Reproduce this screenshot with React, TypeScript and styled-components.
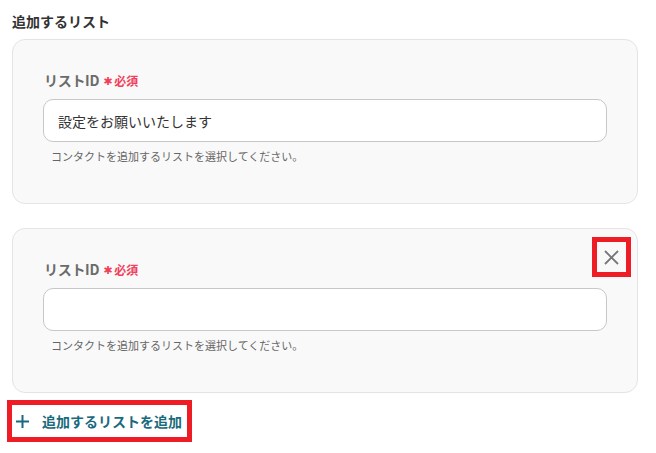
import React from "react";
import styled, { createGlobalStyle } from "styled-components";

const Global = createGlobalStyle`
  html, body { margin: 0; padding: 0; background: #fff; }
  body { font-family: "Noto Sans CJK JP", "Noto Sans", sans-serif; }
  * { box-sizing: border-box; }
`;

const Page = styled.div`
  padding: 12px 18px 0 12px;
  display: flex;
  flex-direction: column;
`;

const Title = styled.div`
  font-size: 14px;
  font-weight: 700;
  color: #333;
  line-height: 18px;
  margin-bottom: 9px;
`;

const Cards = styled.div`
  display: flex;
  flex-direction: column;
  gap: 24px;
`;

const Card = styled.div`
  position: relative;
  background: #f9f9f9;
  border: 1px solid #e4e4e4;
  border-radius: 13px;
  padding: 30px 30px 39px 30px;
  height: 165px;
`;

const Label = styled.div`
  display: flex;
  align-items: center;
  height: 20px;
  margin-bottom: 9px;
  padding-left: 1px;
`;

const LabelText = styled.span`
  font-size: 14px;
  font-weight: 700;
  color: #6b6b6b;
  letter-spacing: -0.3px;
`;

const Asterisk = styled.span`
  color: #f0405a;
  font-family: "DejaVu Sans", sans-serif;
  font-size: 11px;
  font-weight: 700;
  margin-left: 4px;
  line-height: 1;
  position: relative;
  top: 1px;
`;

const Required = styled.span`
  color: #f0405a;
  font-size: 12px;
  font-weight: 700;
  margin-left: 2px;
`;

const Input = styled.div`
  height: 43px;
  background: #fff;
  border: 1px solid #c8c8c8;
  border-radius: 10px;
  display: flex;
  align-items: center;
  padding-left: 14px;
  font-size: 14px;
  color: #333;
`;

const Help = styled.div`
  margin-top: 6px;
  padding-left: 8px;
  font-size: 11px;
  line-height: 16px;
  color: #666;
`;

const CloseButton = styled.button`
  position: absolute;
  top: 8px;
  right: 6px;
  width: 39px;
  height: 40px;
  border: 5px solid #ee1c25;
  background: transparent;
  padding: 0;
  display: flex;
  align-items: center;
  justify-content: center;
  cursor: pointer;
`;

const AddButton = styled.button`
  align-self: flex-start;
  margin-top: 7px;
  margin-left: -5px;
  height: 42px;
  border: 5px solid #ee1c25;
  background: #fff;
  padding: 0 5px 0 4px;
  display: flex;
  align-items: center;
  gap: 13px;
  font-family: "Noto Sans CJK JP", "Noto Sans", sans-serif;
  font-size: 14px;
  font-weight: 700;
  color: #1a6a7e;
  cursor: pointer;
`;

const Field: React.FC<{ value?: string }> = ({ value }) => (
  <>
    <Label>
      <LabelText>リストID</LabelText>
      <Asterisk>✱</Asterisk>
      <Required>必須</Required>
    </Label>
    <Input>{value}</Input>
    <Help>コンタクトを追加するリストを選択してください。</Help>
  </>
);

export default function App() {
  return (
    <>
      <Global />
      <Page>
        <Title>追加するリスト</Title>
        <Cards>
          <Card>
            <Field value="設定をお願いいたします" />
          </Card>
          <Card>
            <CloseButton aria-label="削除">
              <svg width="15" height="15" viewBox="0 0 15 15">
                <path d="M1 1L14 14M14 1L1 14" stroke="#777" strokeWidth="1.8" fill="none" />
              </svg>
            </CloseButton>
            <Field />
          </Card>
        </Cards>
        <AddButton>
          <svg width="13" height="13" viewBox="0 0 13 13">
            <path d="M6.5 0V13M0 6.5H13" stroke="#1a6a7e" strokeWidth="2" fill="none" />
          </svg>
          追加するリストを追加
        </AddButton>
      </Page>
    </>
  );
}
